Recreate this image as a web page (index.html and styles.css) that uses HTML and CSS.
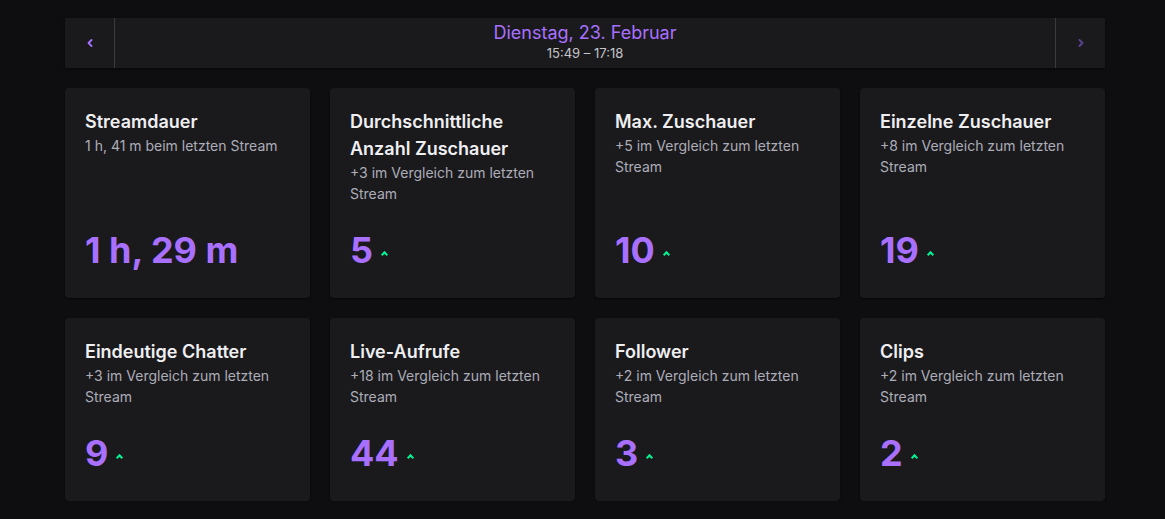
FILE: index.html
```html
<!DOCTYPE html>
<html lang="de">
<head>
<meta charset="utf-8">
<title>Stream-Statistik</title>
<link rel="stylesheet" href="styles.css">
</head>
<body>
<main class="page">
  <nav class="datebar">
    <button class="nav-btn" aria-label="Zurück">
      <svg width="6" height="8" viewBox="0 0 6 8"><path d="M4.5 1 L1.5 4 L4.5 7" fill="none" stroke="currentColor" stroke-width="1.8" stroke-linecap="round" stroke-linejoin="round"/></svg>
    </button>
    <div class="date">
      <div class="date-title">Dienstag, 23. Februar</div>
      <div class="date-time">15:49 – 17:18</div>
    </div>
    <button class="nav-btn nav-btn--disabled" aria-label="Weiter">
      <svg width="6" height="8" viewBox="0 0 6 8"><path d="M1.5 1 L4.5 4 L1.5 7" fill="none" stroke="currentColor" stroke-width="1.8" stroke-linecap="round" stroke-linejoin="round"/></svg>
    </button>
  </nav>

  <section class="grid">
    <article class="card">
      <h2 class="card-title">Streamdauer</h2>
      <p class="card-sub">1 h, 41 m beim letzten Stream</p>
      <div class="card-value">1 h, 29 m</div>
    </article>
    <article class="card">
      <h2 class="card-title">Durchschnittliche Anzahl Zuschauer</h2>
      <p class="card-sub">+3 im Vergleich zum letzten Stream</p>
      <div class="card-value">5<span class="up"></span></div>
    </article>
    <article class="card">
      <h2 class="card-title">Max. Zuschauer</h2>
      <p class="card-sub">+5 im Vergleich zum letzten Stream</p>
      <div class="card-value">10<span class="up"></span></div>
    </article>
    <article class="card">
      <h2 class="card-title">Einzelne Zuschauer</h2>
      <p class="card-sub">+8 im Vergleich zum letzten Stream</p>
      <div class="card-value">19<span class="up"></span></div>
    </article>
    <article class="card">
      <h2 class="card-title">Eindeutige Chatter</h2>
      <p class="card-sub">+3 im Vergleich zum letzten Stream</p>
      <div class="card-value">9<span class="up"></span></div>
    </article>
    <article class="card">
      <h2 class="card-title">Live-Aufrufe</h2>
      <p class="card-sub">+18 im Vergleich zum letzten Stream</p>
      <div class="card-value">44<span class="up"></span></div>
    </article>
    <article class="card">
      <h2 class="card-title">Follower</h2>
      <p class="card-sub">+2 im Vergleich zum letzten Stream</p>
      <div class="card-value">3<span class="up"></span></div>
    </article>
    <article class="card">
      <h2 class="card-title">Clips</h2>
      <p class="card-sub">+2 im Vergleich zum letzten Stream</p>
      <div class="card-value">2<span class="up"></span></div>
    </article>
  </section>
</main>
</body>
</html>
```

FILE: styles.css
```css
* { box-sizing: border-box; }

html, body {
  margin: 0;
  padding: 0;
  background: #0e0e10;
}

body {
  font-family: Inter, "Noto Sans", "Liberation Sans", sans-serif;
  color: #efeff1;
}

.page {
  width: 1040px;
  margin-left: 65px;
  padding-top: 18px;
}

.datebar {
  display: flex;
  height: 50px;
  background: #1a1a1d;
  box-shadow: 0 1px 2px rgba(0, 0, 0, 0.6);
}

.nav-btn {
  width: 50px;
  flex: 0 0 50px;
  background: transparent;
  border: 0;
  padding: 0;
  color: #a970ff;
  display: flex;
  align-items: center;
  justify-content: center;
  cursor: pointer;
}

.nav-btn:first-child { border-right: 1px solid #3a3a3f; }
.nav-btn:last-child { border-left: 1px solid #3a3a3f; }

.nav-btn--disabled { color: #5c4390; }

.date {
  flex: 1;
  display: flex;
  flex-direction: column;
  align-items: center;
  padding-top: 4px;
}

.date-title {
  color: #a970ff;
  font-size: 18px;
  line-height: 22px;
}

.date-time {
  color: #c4c4ca;
  font-size: 13px;
  line-height: 18px;
}

.grid {
  display: grid;
  grid-template-columns: repeat(4, 245px);
  gap: 20px;
  margin-top: 20px;
}

.card {
  background: #1a1a1d;
  border-radius: 4px;
  box-shadow: 0 1px 2px rgba(0, 0, 0, 0.6);
  padding: 20px 20px 26px;
  display: flex;
  flex-direction: column;
}

.card-title {
  margin: 0;
  font-size: 18px;
  font-weight: 600;
  line-height: 27px;
  color: #efeff1;
}

.card-sub {
  margin: 0;
  font-size: 14px;
  line-height: 21px;
  color: #adadb8;
}

.card-value {
  margin-top: auto;
  padding-top: 24px;
  font-size: 36px;
  font-weight: 700;
  line-height: 44px;
  color: #a970ff;
  display: flex;
  align-items: center;
}

.up {
  display: inline-block;
  width: 5px;
  height: 5px;
  margin-left: 9px;
  margin-top: 8px;
  border-left: 2px solid #00f593;
  border-top: 2px solid #00f593;
  transform: rotate(45deg);
}
```
